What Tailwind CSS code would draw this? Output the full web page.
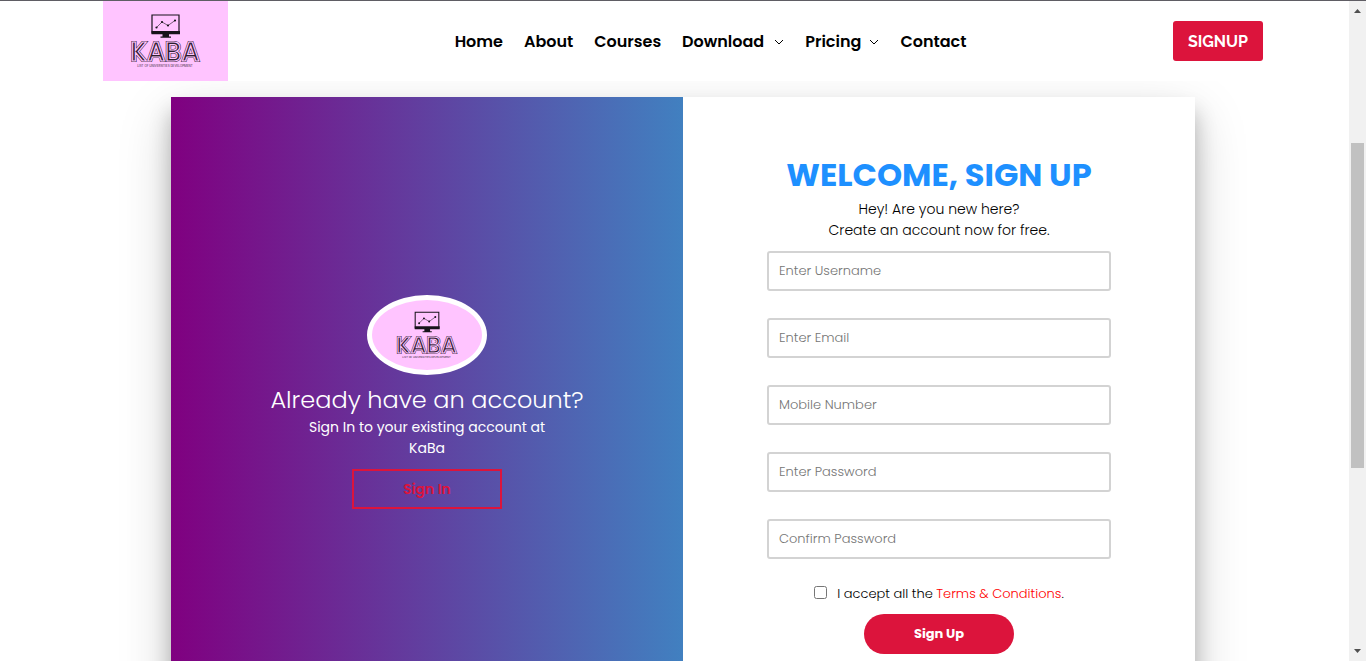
<!DOCTYPE html>
<html lang="en">
<head>
<meta charset="utf-8">
<meta name="viewport" content="width=device-width, initial-scale=1">
<title>KaBa – Sign Up</title>
<script src="https://cdn.jsdelivr.net/npm/@tailwindcss/browser@4"></script>
</head>
<body class="bg-white font-[Poppins,Inter,sans-serif] text-black">
<svg class="hidden" aria-hidden="true">
  <symbol id="kaba" viewBox="0 0 125 80">
    <path d="M49 14h27v18H49z" fill="none" stroke="#17131a" stroke-width="1.2"/>
    <path d="M48.500 30h28.500v3.300H48.500zM59.500 33h6.500v2.600h2v1.200H57.500v-1.200h2z" fill="#17131a"/>
    <path d="M53.500 26.500l5.500-5.500 6 3.500 7-5" fill="none" stroke="#17131a" stroke-width=".6"/>
    <g fill="#17131a"><circle cx="53.500" cy="26.500" r="1.100"/><circle cx="59" cy="21" r="1.100"/><circle cx="65" cy="24.500" r="1.100"/><circle cx="72" cy="19.500" r="1.100"/></g>
    <g font-family="Poppins, sans-serif" font-weight="500" font-size="26" text-anchor="middle">
      <text x="62" y="60" fill="none" stroke="#2b202d" stroke-width="2.200">KABA</text>
      <text x="62" y="60" fill="#2b202d" stroke="#ffc4ff" stroke-width="1.200">KABA</text>
    </g>
    <text x="62" y="66" font-family="Inter, sans-serif" font-size="3" text-anchor="middle" fill="#3a2b3b">LIST OF UNIVERSITIES DEVELOPMENT</text>
  </symbol>
</svg>

<div class="relative h-screen overflow-hidden border-t border-[#5f5d64]">
  <header class="relative z-10 flex h-20 items-center justify-between bg-white px-[103px]">
    <a href="#" aria-label="KABA" class="block bg-[#ffc4ff]"><svg class="h-20 w-[125px]"><use href="#kaba"/></svg></a>
    <nav class="mt-0.5 ml-5 flex items-center gap-[21px] text-base font-semibold">
      <a href="#">Home</a>
      <a href="#">About</a>
      <a href="#">Courses</a>
      <a href="#" class="flex items-center gap-2.5">Download
        <svg class="size-2.5" viewBox="0 0 10 10" fill="none" stroke="currentColor"><path d="M1 3l4 4 4-4"/></svg></a>
      <a href="#" class="flex items-center gap-2">Pricing
        <svg class="size-2.5" viewBox="0 0 10 10" fill="none" stroke="currentColor"><path d="M1 3l4 4 4-4"/></svg></a>
      <a href="#">Contact</a>
    </nav>
    <button type="button" class="h-10 w-[90px] rounded-[3px] bg-[#dc143c] pt-0.5 font-[Raleway,Lato,sans-serif] text-base font-bold text-white">SIGNUP</button>
  </header>

  <main class="mx-auto mt-4 grid min-h-[610px] max-w-5xl grid-cols-2 shadow-[0_19px_50px_rgba(0,0,0,0.18),0_15px_20px_rgba(0,0,0,0.24)]">
    <section class="flex flex-col items-center justify-center bg-linear-to-r/srgb from-[#800080] to-[#4180c0] text-center text-white">
      <div class="h-20 w-[120px] overflow-hidden rounded-[50%] border-5 border-white bg-[#ffc4ff]"><svg class="size-full" viewBox="0 0 125 80"><use href="#kaba"/></svg></div>
      <h2 class="mt-2 text-2xl leading-[34px] font-light">Already have an account?</h2>
      <p class="w-64 text-sm leading-[21px]">Sign In to your existing account at KaBa</p>
      <button type="button" class="mt-2.5 h-10 w-[150px] border-2 border-[#dc143c] text-sm font-semibold text-[#dc143c]">Sign In</button>
    </section>

    <section class="flex flex-col items-center justify-center bg-white text-center">
      <h1 class="text-[32px] leading-12 font-bold text-[#1e90ff]">WELCOME, SIGN UP</h1>
      <p class="text-sm leading-[21px] font-light">Hey! Are you new here?<br>Create an account now for free.</p>
      <form class="mt-2.5 flex w-[344px] flex-col items-center">
        <div class="flex w-full flex-col gap-[27px] text-[13px] font-light">
          <input type="text" aria-label="Username" placeholder="Enter Username" class="h-10 rounded-[3px] border-2 border-[#d3d3d3] px-2.5 placeholder:text-[#757575]">
          <input type="email" aria-label="Email" placeholder="Enter Email" class="h-10 rounded-[3px] border-2 border-[#d3d3d3] px-2.5 placeholder:text-[#757575]">
          <input type="tel" aria-label="Mobile number" placeholder="Mobile Number" class="h-10 rounded-[3px] border-2 border-[#d3d3d3] px-2.5 placeholder:text-[#757575]">
          <input type="password" aria-label="Password" placeholder="Enter Password" class="h-10 rounded-[3px] border-2 border-[#d3d3d3] px-2.5 placeholder:text-[#757575]">
          <input type="password" aria-label="Confirm password" placeholder="Confirm Password" class="h-10 rounded-[3px] border-2 border-[#d3d3d3] px-2.5 placeholder:text-[#757575]">
        </div>
        <div class="mt-[25px] flex items-center gap-2.5 text-[13px] leading-5 font-light">
          <input id="terms" type="checkbox" class="mb-0.5 size-[13px]">
          <label for="terms">I accept all the <a href="#" class="text-[#ff0000]">Terms &amp; Conditions</a>.</label>
        </div>
        <button type="submit" class="mt-2.5 h-10 w-[150px] rounded-full bg-[#dc143c] text-[13px] font-bold text-white">Sign Up</button>
      </form>
    </section>
  </main>

  <div class="absolute inset-y-0 right-0 z-20 flex w-[17px] flex-col items-center justify-between bg-[#f1f1f1] py-2" aria-hidden="true">
    <svg class="h-1 w-[7px]" viewBox="0 0 7 4" fill="#505050"><path d="M0 4L3.500 0 7 4z"/></svg>
    <div class="absolute top-[21.5%] h-[325px] w-[13px] bg-[#c1c1c1]"></div>
    <svg class="h-1 w-[7px]" viewBox="0 0 7 4" fill="#505050"><path d="M0 0h7L3.500 4z"/></svg>
  </div>
</div>
</body>
</html>
